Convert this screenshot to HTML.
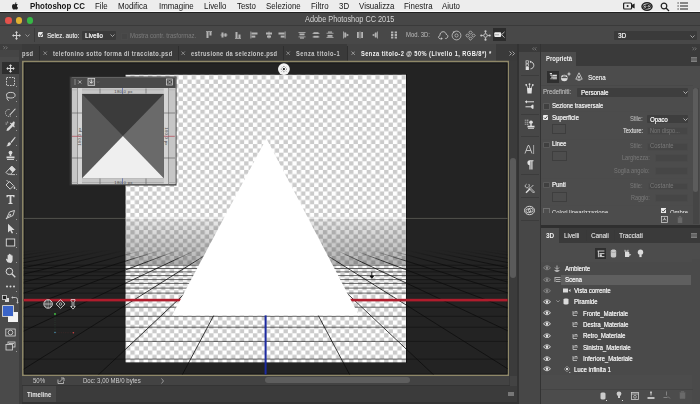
<!DOCTYPE html>
<html><head><meta charset="utf-8"><style>
html,body{margin:0;padding:0}
body{width:700px;height:404px;overflow:hidden;position:relative;background:#4c4c4c;font-family:"Liberation Sans", sans-serif}
</style></head><body>
<div style="position:absolute;left:0px;top:0px;width:700px;height:12.3px;background:#ededed;"></div><div style="position:absolute;left:0px;top:11.1px;width:700px;height:1.1px;background:#fafafa;"></div><div style="position:absolute;left:0px;top:12.3px;width:700px;height:1px;background:#202020;"></div><div style="position:absolute;left:30px;top:0.21px;font-size:9.88px;line-height:11.85px;color:#151515;font-weight:bold;white-space:nowrap;transform:scaleX(0.8000);transform-origin:0 0;">Photoshop CC</div><div style="position:absolute;left:95.4px;top:0.21px;font-size:9.88px;line-height:11.85px;color:#151515;font-weight:normal;white-space:nowrap;transform:scaleX(0.8000);transform-origin:0 0;">File</div><div style="position:absolute;left:118px;top:0.21px;font-size:9.88px;line-height:11.85px;color:#151515;font-weight:normal;white-space:nowrap;transform:scaleX(0.8000);transform-origin:0 0;">Modifica</div><div style="position:absolute;left:159px;top:0.21px;font-size:9.88px;line-height:11.85px;color:#151515;font-weight:normal;white-space:nowrap;transform:scaleX(0.8000);transform-origin:0 0;">Immagine</div><div style="position:absolute;left:203.6px;top:0.21px;font-size:9.88px;line-height:11.85px;color:#151515;font-weight:normal;white-space:nowrap;transform:scaleX(0.8000);transform-origin:0 0;">Livello</div><div style="position:absolute;left:237px;top:0.21px;font-size:9.88px;line-height:11.85px;color:#151515;font-weight:normal;white-space:nowrap;transform:scaleX(0.8000);transform-origin:0 0;">Testo</div><div style="position:absolute;left:266px;top:0.21px;font-size:9.88px;line-height:11.85px;color:#151515;font-weight:normal;white-space:nowrap;transform:scaleX(0.8000);transform-origin:0 0;">Selezione</div><div style="position:absolute;left:311px;top:0.21px;font-size:9.88px;line-height:11.85px;color:#151515;font-weight:normal;white-space:nowrap;transform:scaleX(0.8000);transform-origin:0 0;">Filtro</div><div style="position:absolute;left:339px;top:0.21px;font-size:9.88px;line-height:11.85px;color:#151515;font-weight:normal;white-space:nowrap;transform:scaleX(0.8000);transform-origin:0 0;">3D</div><div style="position:absolute;left:358.6px;top:0.21px;font-size:9.88px;line-height:11.85px;color:#151515;font-weight:normal;white-space:nowrap;transform:scaleX(0.8000);transform-origin:0 0;">Visualizza</div><div style="position:absolute;left:404px;top:0.21px;font-size:9.88px;line-height:11.85px;color:#151515;font-weight:normal;white-space:nowrap;transform:scaleX(0.8000);transform-origin:0 0;">Finestra</div><div style="position:absolute;left:442.4px;top:0.21px;font-size:9.88px;line-height:11.85px;color:#151515;font-weight:normal;white-space:nowrap;transform:scaleX(0.8000);transform-origin:0 0;">Aiuto</div><svg style="position:absolute;left:11px;top:0.7px;" width="8" height="9" viewBox="0 0 8 9"><path d="M5.3 1.2c.1.8-.6 1.7-1.4 1.7-.1-.8.6-1.6 1.4-1.7z M3.9 3.1c.5 0 .9-.3 1.4-.3.4 0 1.1.2 1.5.8-1.3.8-1.1 2.7.3 3.2-.3.8-.9 1.8-1.6 1.8-.5 0-.7-.3-1.3-.3s-.8.3-1.3.3C2 8.6 1 6.9 1 5.4c0-1.5 1-2.3 1.8-2.3.5 0 .8.3 1.1.3z" fill="#222"/></svg><svg style="position:absolute;left:623px;top:2px;" width="13" height="8" viewBox="0 0 13 8"><rect x="0.6" y="1" width="8" height="6" rx="1" fill="none" stroke="#222" stroke-width="1.2"/><circle cx="4.6" cy="4" r="1" fill="#222"/><path d="M8.6 3l3-1.5v5l-3-1.5z" fill="#222"/></svg><svg style="position:absolute;left:640.5px;top:1.5px;" width="12" height="9" viewBox="0 0 12 9"><ellipse cx="6" cy="4.5" rx="5" ry="3.7" fill="none" stroke="#222" stroke-width="1.5"/><ellipse cx="4.8" cy="4.7" rx="2.2" ry="1.7" fill="none" stroke="#222" stroke-width="1.1"/><ellipse cx="7.2" cy="4.3" rx="2.2" ry="1.7" fill="none" stroke="#222" stroke-width="1.1"/></svg><svg style="position:absolute;left:660px;top:1.5px;" width="10" height="10" viewBox="0 0 10 10"><circle cx="4" cy="4" r="2.8" fill="none" stroke="#222" stroke-width="1.2"/><path d="M6 6l3 3" stroke="#222" stroke-width="1.3"/></svg><svg style="position:absolute;left:676.5px;top:2px;" width="12" height="8" viewBox="0 0 12 8"><path d="M0.5 1h1.2M0.5 4h1.2M0.5 7h1.2M3 1h8M3 4h8M3 7h8" stroke="#222" stroke-width="1.2"/></svg><div style="position:absolute;left:0px;top:13px;width:700px;height:12.5px;background:#474747;"></div><div style="position:absolute;left:5.050000000000001px;top:17.05px;width:6.5px;height:6.5px;border-radius:50%;background:#e4524c"></div><div style="position:absolute;left:15.75px;top:17.05px;width:6.5px;height:6.5px;border-radius:50%;background:#e0b132"></div><div style="position:absolute;left:26.75px;top:17.05px;width:6.5px;height:6.5px;border-radius:50%;background:#36b846"></div><div style="position:absolute;left:305px;top:14.11px;font-size:9.19px;line-height:11.03px;color:#d5d5d5;font-weight:normal;white-space:nowrap;transform:scaleX(0.8000);transform-origin:0 0;">Adobe Photoshop CC 2015</div><div style="position:absolute;left:0px;top:25.5px;width:700px;height:18px;background:#484848;"></div><div style="position:absolute;left:0px;top:25.1px;width:700px;height:0.8px;background:#3a3a3a;"></div><div style="position:absolute;left:0px;top:43.5px;width:700px;height:0.8px;background:#2c2c2c;"></div><svg style="position:absolute;left:11.5px;top:30.5px;" width="9" height="9" viewBox="0 0 9 9"><path d="M4.5 1v7M1 4.5h7" stroke="#cfcfcf" stroke-width="1.1"/><path d="M4.5 0l-1.6 1.8h3.2zM4.5 9l-1.6-1.8h3.2zM0 4.5l1.8-1.6v3.2zM9 4.5L7.2 2.9v3.2z" fill="#cfcfcf"/></svg><svg style="position:absolute;left:24.5px;top:34px;" width="5" height="3" viewBox="0 0 5 3"><path d="M0.5 0.5l2 2 2-2" fill="none" stroke="#aaa" stroke-width="0.8"/></svg><div style="position:absolute;left:33.5px;top:28px;width:0.8px;height:14px;background:#3a3a3a;"></div><div style="position:absolute;left:37.7px;top:32px;width:5.4px;height:5.4px;background:#e8e8e8;border-radius:1px"></div><svg style="position:absolute;left:37.7px;top:32px;" width="6" height="6" viewBox="0 0 6 6"><path d="M1.2 2.8l1.4 1.4 2.4-3" fill="none" stroke="#333" stroke-width="1"/></svg><div style="position:absolute;left:46.9px;top:30.53px;font-size:7.62px;line-height:9.15px;color:#d8d8d8;font-weight:normal;white-space:nowrap;transform:scaleX(0.8000);transform-origin:0 0;text-shadow:0.22px 0 0 #d8d8d8">Selez. auto:</div><div style="position:absolute;left:81.9px;top:30.7px;width:33.8px;height:9.2px;background:#3a3a3a;border-radius:1px"></div><div style="position:absolute;left:84.6px;top:30.71px;font-size:7.82px;line-height:9.39px;color:#e8e8e8;font-weight:normal;white-space:nowrap;transform:scaleX(0.8000);transform-origin:0 0;text-shadow:0.22px 0 0 #e8e8e8">Livello</div><svg style="position:absolute;left:109.5px;top:34px;" width="5" height="3" viewBox="0 0 5 3"><path d="M0.5 0.5l2 2 2-2" fill="none" stroke="#bbb" stroke-width="0.8"/></svg><div style="position:absolute;left:120.5px;top:32.5px;width:5px;height:5px;background:#454545;border:0.5px solid #4a4a4a"></div><div style="position:absolute;left:129.9px;top:30.91px;font-size:7.49px;line-height:8.99px;color:#7d7d7d;font-weight:normal;white-space:nowrap;transform:scaleX(0.8000);transform-origin:0 0;">Mostra contr. trasformaz.</div><svg style="position:absolute;left:205px;top:31px;" width="8" height="8" viewBox="0 0 8 8"><rect x="1" y="0" width="6" height="0.8" fill="#b4b4b4"/><rect x="1.5" y="1" width="2" height="6" fill="#b4b4b4"/><rect x="4.5" y="1" width="2" height="3.5" fill="#b4b4b4"/></svg><svg style="position:absolute;left:219.8px;top:31px;" width="8" height="8" viewBox="0 0 8 8"><rect x="0.5" y="3.6" width="7" height="0.8" fill="#b4b4b4"/><rect x="1.5" y="1.5" width="2" height="5" fill="#b4b4b4"/><rect x="4.5" y="2.3" width="2" height="3.4" fill="#b4b4b4"/></svg><svg style="position:absolute;left:233.5px;top:31px;" width="8" height="8" viewBox="0 0 8 8"><rect x="1" y="7.2" width="6" height="0.8" fill="#b4b4b4"/><rect x="1.5" y="1" width="2" height="6" fill="#b4b4b4"/><rect x="4.5" y="3.5" width="2" height="3.5" fill="#b4b4b4"/></svg><svg style="position:absolute;left:250px;top:31px;" width="8" height="8" viewBox="0 0 8 8"><rect x="0.5" y="0.5" width="0.8" height="7" fill="#b4b4b4"/><rect x="1.5" y="1.5" width="6" height="2" fill="#b4b4b4"/><rect x="1.5" y="4.6" width="3.8" height="2" fill="#b4b4b4"/></svg><svg style="position:absolute;left:264.8px;top:31px;" width="8" height="8" viewBox="0 0 8 8"><rect x="3.6" y="0.5" width="0.8" height="7" fill="#b4b4b4"/><rect x="1" y="1.5" width="6" height="2" fill="#b4b4b4"/><rect x="2" y="4.6" width="4" height="2" fill="#b4b4b4"/></svg><svg style="position:absolute;left:278px;top:31px;" width="8" height="8" viewBox="0 0 8 8"><rect x="6.7" y="0.5" width="0.8" height="7" fill="#b4b4b4"/><rect x="0.5" y="1.5" width="6" height="2" fill="#b4b4b4"/><rect x="2.7" y="4.6" width="3.8" height="2" fill="#b4b4b4"/></svg><svg style="position:absolute;left:297.5px;top:31px;" width="8" height="8" viewBox="0 0 8 8"><rect x="0.5" y="1" width="7" height="0.8" fill="#b4b4b4"/><rect x="1.5" y="2.5" width="5" height="1.8" fill="#b4b4b4"/><rect x="0.5" y="5.5" width="7" height="0.8" fill="#b4b4b4"/><rect x="2" y="6.4" width="4" height="1.2" fill="#b4b4b4"/></svg><svg style="position:absolute;left:312px;top:31px;" width="8" height="8" viewBox="0 0 8 8"><rect x="0.5" y="2.2" width="7" height="0.7" fill="#b4b4b4"/><rect x="1.5" y="1.2" width="5" height="1.8" fill="#b4b4b4"/><rect x="0.5" y="5.6" width="7" height="0.7" fill="#b4b4b4"/><rect x="1.5" y="4.8" width="5" height="1.8" fill="#b4b4b4"/></svg><svg style="position:absolute;left:325.5px;top:31px;" width="8" height="8" viewBox="0 0 8 8"><rect x="2" y="0.5" width="4" height="1.2" fill="#b4b4b4"/><rect x="0.5" y="1.8" width="7" height="0.8" fill="#b4b4b4"/><rect x="1.5" y="4" width="5" height="1.8" fill="#b4b4b4"/><rect x="0.5" y="6.2" width="7" height="0.8" fill="#b4b4b4"/></svg><svg style="position:absolute;left:342px;top:31px;" width="8" height="8" viewBox="0 0 8 8"><rect x="1" y="0.5" width="0.8" height="7" fill="#b4b4b4"/><rect x="2.3" y="1.5" width="1.8" height="5" fill="#b4b4b4"/><path d="M4.5 2.5l2.5 1.5-2.5 1.5z" fill="#b4b4b4"/></svg><svg style="position:absolute;left:356.4px;top:31px;" width="8" height="8" viewBox="0 0 8 8"><rect x="1" y="1" width="1.8" height="6" fill="#b4b4b4"/><rect x="3.6" y="0.5" width="0.8" height="7" fill="#b4b4b4"/><rect x="5.2" y="1" width="1.8" height="6" fill="#b4b4b4"/></svg><svg style="position:absolute;left:370.5px;top:31px;" width="8" height="8" viewBox="0 0 8 8"><rect x="6.2" y="0.5" width="0.8" height="7" fill="#b4b4b4"/><rect x="3.9" y="1.5" width="1.8" height="5" fill="#b4b4b4"/><path d="M3.5 2.5L1 4l2.5 1.5z" fill="#b4b4b4"/></svg><svg style="position:absolute;left:390px;top:31px;" width="8" height="8" viewBox="0 0 8 8"><rect x="1" y="0.5" width="2.3" height="7" fill="#b4b4b4"/><rect x="4.7" y="0.5" width="2.3" height="7" fill="#b4b4b4"/><path d="M0.5 2.5h7M0.5 5.5h7" stroke="#484848" stroke-width="0.6"/></svg><div style="position:absolute;left:406px;top:30.87px;font-size:7.38px;line-height:8.85px;color:#bdbdbd;font-weight:normal;white-space:nowrap;transform:scaleX(0.8000);transform-origin:0 0;">Mod. 3D:</div><svg style="position:absolute;left:437px;top:29.5px;" width="12" height="11" viewBox="0 0 12 11"><path d="M3 5.5c-.3-2 1.2-3.8 3.2-3.8 1.6 0 2.8 1.2 2.9 2.6 1.3.4 2 1.4 1.7 2.6-.3 1-1.3 1.6-2.5 1.6" fill="none" stroke="#c8c8c8" stroke-width="0.9"/><path d="M3 5.5c-1.3.6-1.8 1.6-1.3 2.4.4.7 1.5 1 2.8.9" fill="none" stroke="#c8c8c8" stroke-width="0.9"/><path d="M4.2 7.2l1.6 1.6-2 .9z" fill="#c8c8c8"/></svg><svg style="position:absolute;left:451.3px;top:29.5px;" width="11" height="11" viewBox="0 0 11 11"><circle cx="5.5" cy="5.5" r="4.4" fill="none" stroke="#c8c8c8" stroke-width="0.8"/><circle cx="5.5" cy="5.5" r="1.6" fill="none" stroke="#c8c8c8" stroke-width="0.7"/><path d="M1.8 1.6l2.2.2-1.6 1.6z" fill="#c8c8c8"/></svg><svg style="position:absolute;left:465px;top:29.5px;" width="11" height="11" viewBox="0 0 11 11"><path d="M5.5 0.8l1.7 1.7-1.7 1.7-1.7-1.7zM5.5 6.8l1.7 1.7-1.7 1.7-1.7-1.7zM0.8 5.5l1.7-1.7 1.7 1.7-1.7 1.7zM6.8 5.5l1.7-1.7 1.7 1.7-1.7 1.7z" fill="none" stroke="#c8c8c8" stroke-width="0.8"/></svg><svg style="position:absolute;left:479.6px;top:29.5px;" width="11" height="11" viewBox="0 0 11 11"><circle cx="5.5" cy="5.5" r="1.8" fill="none" stroke="#c8c8c8" stroke-width="0.9"/><path d="M5.5 1v2.5M5.5 7.5V10M1 5.5h2.5M7.5 5.5H10" stroke="#c8c8c8" stroke-width="0.8"/><circle cx="5.5" cy="1.3" r="1.1" fill="#c8c8c8"/><circle cx="5.5" cy="9.7" r="1.1" fill="#c8c8c8"/><circle cx="1.3" cy="5.5" r="1.1" fill="#c8c8c8"/><circle cx="9.7" cy="5.5" r="1.1" fill="#c8c8c8"/></svg><div style="position:absolute;left:493px;top:28.2px;width:12.7px;height:13.3px;background:#2c2c2c;"></div><svg style="position:absolute;left:493px;top:28.2px;" width="13" height="13" viewBox="0 0 13 13"><rect x="1.3" y="4.3" width="6.8" height="4.8" rx="1" fill="#eee"/><circle cx="3" cy="6.7" r="0.7" fill="#888"/><circle cx="5" cy="6.7" r="0.7" fill="#888"/><path d="M8.5 6.7l3-2.8M8.5 6.7l3 2.8" fill="none" stroke="#ddd" stroke-width="0.8"/></svg><div style="position:absolute;left:614px;top:30.7px;width:82.6px;height:9.8px;background:#3a3a3a;border-radius:1px"></div><div style="position:absolute;left:617.7px;top:30.98px;font-size:7.88px;line-height:9.45px;color:#e8e8e8;font-weight:normal;white-space:nowrap;transform:scaleX(0.8000);transform-origin:0 0;text-shadow:0.22px 0 0 #e8e8e8">3D</div><svg style="position:absolute;left:689.5px;top:34.5px;" width="5" height="3" viewBox="0 0 5 3"><path d="M0.5 0.5l2 2 2-2" fill="none" stroke="#bbb" stroke-width="0.8"/></svg><div style="position:absolute;left:19.5px;top:44.3px;width:498px;height:17px;background:#3a3a3a;"></div><div style="position:absolute;left:347px;top:44.3px;width:149px;height:17px;background:#444444;"></div><div style="position:absolute;left:22.3px;top:49.29px;font-size:7.52px;line-height:9.03px;color:#c8c8c8;font-weight:bold;white-space:nowrap;letter-spacing:0.638px;transform:scaleX(0.7576);transform-origin:0 0">psd</div><div style="position:absolute;left:39.4px;top:45.5px;width:0.7px;height:15px;background:#2f2f2f;"></div><div style="position:absolute;left:177.7px;top:45.5px;width:0.7px;height:15px;background:#2f2f2f;"></div><div style="position:absolute;left:283px;top:45.5px;width:0.7px;height:15px;background:#2f2f2f;"></div><div style="position:absolute;left:347px;top:45.5px;width:0.7px;height:15px;background:#2f2f2f;"></div><svg style="position:absolute;left:43.199999999999996px;top:50.5px;" width="4.4" height="4.4" viewBox="0 0 4.4 4.4"><path d="M0.5 0.5l3.4 3.4M3.9 0.5l-3.4 3.4" stroke="#a8a8a8" stroke-width="0.7"/></svg><svg style="position:absolute;left:181.20000000000002px;top:50.5px;" width="4.4" height="4.4" viewBox="0 0 4.4 4.4"><path d="M0.5 0.5l3.4 3.4M3.9 0.5l-3.4 3.4" stroke="#a8a8a8" stroke-width="0.7"/></svg><svg style="position:absolute;left:286.40000000000003px;top:50.5px;" width="4.4" height="4.4" viewBox="0 0 4.4 4.4"><path d="M0.5 0.5l3.4 3.4M3.9 0.5l-3.4 3.4" stroke="#a8a8a8" stroke-width="0.7"/></svg><svg style="position:absolute;left:350.8px;top:50.5px;" width="4.4" height="4.4" viewBox="0 0 4.4 4.4"><path d="M0.5 0.5l3.4 3.4M3.9 0.5l-3.4 3.4" stroke="#b8b8b8" stroke-width="0.7"/></svg><div style="position:absolute;left:52.8px;top:49.29px;font-size:7.52px;line-height:9.03px;color:#c8c8c8;font-weight:bold;white-space:nowrap;letter-spacing:0.533px;transform:scaleX(0.7576);transform-origin:0 0">telefonino sotto forma di tracciato.psd</div><div style="position:absolute;left:190.9px;top:49.29px;font-size:7.52px;line-height:9.03px;color:#c8c8c8;font-weight:bold;white-space:nowrap;letter-spacing:0.512px;transform:scaleX(0.7576);transform-origin:0 0">estrusione da selezione.psd</div><div style="position:absolute;left:295.7px;top:49.29px;font-size:7.52px;line-height:9.03px;color:#c8c8c8;font-weight:bold;white-space:nowrap;letter-spacing:0.675px;transform:scaleX(0.7576);transform-origin:0 0">Senza titolo-1</div><div style="position:absolute;left:360.6px;top:49.29px;font-size:7.52px;line-height:9.03px;color:#f4f4f4;font-weight:bold;white-space:nowrap;letter-spacing:0.590px;transform:scaleX(0.7576);transform-origin:0 0">Senza titolo-2 @ 50% (Livello 1, RGB/8*) *</div><svg style="position:absolute;left:508.5px;top:50.5px;" width="7" height="5" viewBox="0 0 7 5"><path d="M0.5 0.5l2 2-2 2M3.5 0.5l2 2-2 2" fill="none" stroke="#c0c0c0" stroke-width="0.8"/></svg><div style="position:absolute;left:0px;top:44.3px;width:19.3px;height:360px;background:#4a4a4a;"></div><div style="position:absolute;left:0px;top:44.3px;width:19.3px;height:5.7px;background:#3e3e3e;"></div><div style="position:absolute;left:0px;top:50px;width:19.3px;height:7px;background:#454545;"></div><svg style="position:absolute;left:3px;top:45.8px;" width="6" height="4" viewBox="0 0 6 4"><path d="M0.3 0.3l1.5 1.5-1.5 1.5M2.8 0.3l1.5 1.5-1.5 1.5" fill="none" stroke="#999" stroke-width="0.6"/></svg><div style="position:absolute;left:19.3px;top:44.3px;width:2.7px;height:360px;background:#3e3e3e;"></div><div style="position:absolute;left:2.2px;top:61.7px;width:16.4px;height:12.3px;background:#2e2e2e;"></div><svg style="position:absolute;left:4.699999999999999px;top:62.599999999999994px;" width="11" height="11" viewBox="0 0 11 11"><path d="M5.5 2.5v6M2.5 5.5h6" stroke="#dadada" stroke-width="1.2"/><path d="M5.5 1.3l-1.7 1.8h3.4zM5.5 9.7l-1.7-1.8h3.4zM1.3 5.5l1.8-1.7v3.4zM9.7 5.5l-1.8-1.7v3.4z" fill="#dadada"/></svg><svg style="position:absolute;left:4.699999999999999px;top:76.3px;" width="11" height="11" viewBox="0 0 11 11"><rect x="1.5" y="1.5" width="8" height="8" fill="none" stroke="#dadada" stroke-width="0.9" stroke-dasharray="1.6 1.1"/></svg><div style="position:absolute;left:16px;top:85.8px;width:1.1px;height:1.1px;background:#9a9a9a;"></div><svg style="position:absolute;left:4.699999999999999px;top:91.4px;" width="11" height="11" viewBox="0 0 11 11"><ellipse cx="5.8" cy="4.2" rx="4.3" ry="2.8" fill="none" stroke="#dadada" stroke-width="0.9"/><path d="M2.2 6c-.8 1.4.3 2.6 1.5 3.8" fill="none" stroke="#dadada" stroke-width="0.9"/></svg><div style="position:absolute;left:16px;top:100.9px;width:1.1px;height:1.1px;background:#9a9a9a;"></div><svg style="position:absolute;left:4.699999999999999px;top:106.7px;" width="11" height="11" viewBox="0 0 11 11"><path d="M4.5 2.5a3.5 3.5 0 1 0 1.8 6" fill="none" stroke="#dadada" stroke-width="0.8" stroke-dasharray="1.2 0.8"/><path d="M10 1.5L5 7l-1 1.5 1.6-.8L10.8 2z" fill="#dadada"/></svg><div style="position:absolute;left:16px;top:116.2px;width:1.1px;height:1.1px;background:#9a9a9a;"></div><svg style="position:absolute;left:4.699999999999999px;top:120.6px;" width="11" height="11" viewBox="0 0 11 11"><path d="M9.8 1.2l-1-1-2.2 2.2-.8-.8-.8.8 1.2 1.2L2 7.8 1.5 10l2.2-.5 4.2-4.2 1.2 1.2.8-.8-.8-.8z" fill="#dadada"/><path d="M1 1.5l1 1M2.5 0.5l.3 1.5M0.5 3l1.5.2" stroke="#dadada" stroke-width="0.6"/></svg><div style="position:absolute;left:16px;top:130.1px;width:1.1px;height:1.1px;background:#9a9a9a;"></div><svg style="position:absolute;left:4.699999999999999px;top:135.5px;" width="11" height="11" viewBox="0 0 11 11"><path d="M10 0.8L5.5 6l1 1L10.6 1.4z" fill="#dadada"/><path d="M5.2 6.4c-1.3-.3-2.5.6-2.6 2-.1 1-.8 1.4-1.6 1.6 2 .6 4.5.1 5-2.4z" fill="#dadada"/></svg><div style="position:absolute;left:16px;top:145px;width:1.1px;height:1.1px;background:#9a9a9a;"></div><svg style="position:absolute;left:4.699999999999999px;top:150.4px;" width="11" height="11" viewBox="0 0 11 11"><circle cx="5.5" cy="2.6" r="1.9" fill="#dadada"/><path d="M4.7 4h1.6v2.2H4.7z" fill="#dadada"/><path d="M1.5 6.5h8v1.8h-8z" fill="#dadada"/><path d="M2 9h7v.9H2z" fill="#dadada"/></svg><div style="position:absolute;left:16px;top:159.9px;width:1.1px;height:1.1px;background:#9a9a9a;"></div><svg style="position:absolute;left:4.699999999999999px;top:164.5px;" width="11" height="11" viewBox="0 0 11 11"><path d="M6.8 1l3.5 3.5-4.7 4.7H2.8L1 7.4z" fill="none" stroke="#dadada" stroke-width="0.9"/><path d="M6.8 1l3.5 3.5-2.8 2.8L4 3.8z" fill="#dadada"/><path d="M5.5 9.6h4.5" stroke="#dadada" stroke-width="0.8"/></svg><div style="position:absolute;left:16px;top:174px;width:1.1px;height:1.1px;background:#9a9a9a;"></div><svg style="position:absolute;left:4.699999999999999px;top:179.4px;" width="11" height="11" viewBox="0 0 11 11"><path d="M4.5 2.5l4.2 4.2-3.5 3.5L1 6z" fill="none" stroke="#dadada" stroke-width="0.9"/><path d="M1.5 1l2.5 2.5" stroke="#dadada" stroke-width="0.8"/><path d="M9.5 7.2c.6.9.9 1.5.9 1.9a.9.9 0 0 1-1.8 0c0-.4.3-1 .9-1.9z" fill="#dadada"/></svg><div style="position:absolute;left:16px;top:188.9px;width:1.1px;height:1.1px;background:#9a9a9a;"></div><svg style="position:absolute;left:4.699999999999999px;top:193.5px;" width="11" height="11" viewBox="0 0 11 11"><path d="M1.5 1h8v2.2h-1L8 2.2H6.4v6.6l1.2.4V10H3.4v-.8l1.2-.4V2.2H3l-.5 1H1.5z" fill="#dadada"/></svg><svg style="position:absolute;left:4.699999999999999px;top:209.1px;" width="11" height="11" viewBox="0 0 11 11"><path d="M9.5 1.5L4.5 3 2 8.5 1 10l1.5-1L8 6.5z" fill="none" stroke="#dadada" stroke-width="0.9"/><circle cx="5.2" cy="5.8" r="0.9" fill="#dadada"/><path d="M2.2 8.8L4.6 6.4" stroke="#dadada" stroke-width="0.6"/></svg><div style="position:absolute;left:16px;top:218.6px;width:1.1px;height:1.1px;background:#9a9a9a;"></div><svg style="position:absolute;left:4.699999999999999px;top:223.2px;" width="11" height="11" viewBox="0 0 11 11"><path d="M3 0.8v8.6l2.2-2 1.6 3.2 1.3-.6-1.5-3.1h3z" fill="#dadada"/></svg><div style="position:absolute;left:16px;top:232.7px;width:1.1px;height:1.1px;background:#9a9a9a;"></div><svg style="position:absolute;left:4.699999999999999px;top:237.3px;" width="11" height="11" viewBox="0 0 11 11"><rect x="1.3" y="2" width="8.4" height="7" fill="#3c3c3c" stroke="#dadada" stroke-width="0.9"/></svg><div style="position:absolute;left:16px;top:246.8px;width:1.1px;height:1.1px;background:#9a9a9a;"></div><svg style="position:absolute;left:4.699999999999999px;top:252.89999999999998px;" width="11" height="11" viewBox="0 0 11 11"><path d="M3 9.5C1.8 8.2.8 6.5 1 6c.3-.6 1-.4 1.6.4V2.4c0-.9 1.2-.9 1.2 0V5V1.4c0-.9 1.3-.9 1.3 0V5V1.9c0-.9 1.3-.9 1.3 0V5V3c0-.9 1.2-.9 1.2 0v3.8c0 1.6-.8 2.7-1.6 3.2z" fill="#dadada"/></svg><div style="position:absolute;left:16px;top:262.4px;width:1.1px;height:1.1px;background:#9a9a9a;"></div><svg style="position:absolute;left:4.699999999999999px;top:267.0px;" width="11" height="11" viewBox="0 0 11 11"><circle cx="4.4" cy="4.4" r="3.3" fill="none" stroke="#dadada" stroke-width="1"/><path d="M6.8 6.8l3.5 3.5" stroke="#dadada" stroke-width="1.3"/></svg><svg style="position:absolute;left:4.699999999999999px;top:281.2px;" width="11" height="11" viewBox="0 0 11 11"><circle cx="2" cy="5.5" r="1" fill="#dadada"/><circle cx="5.5" cy="5.5" r="1" fill="#dadada"/><circle cx="9" cy="5.5" r="1" fill="#dadada"/></svg><div style="position:absolute;left:16px;top:290.7px;width:1.1px;height:1.1px;background:#9a9a9a;"></div><svg style="position:absolute;left:4.699999999999999px;top:326.5px;" width="11" height="11" viewBox="0 0 11 11"><rect x="0.8" y="2" width="9.4" height="7" fill="none" stroke="#dadada" stroke-width="0.8"/><circle cx="5.5" cy="5.5" r="2.3" fill="none" stroke="#dadada" stroke-width="0.8"/></svg><svg style="position:absolute;left:4.699999999999999px;top:341.4px;" width="11" height="11" viewBox="0 0 11 11"><rect x="3" y="1" width="7" height="5" fill="none" stroke="#dadada" stroke-width="0.8"/><rect x="1" y="3.5" width="6.5" height="5.5" fill="#4d4d4d" stroke="#dadada" stroke-width="0.8"/><path d="M4 2.5h5" stroke="#dadada" stroke-width="0.8"/></svg><div style="position:absolute;left:16px;top:350.9px;width:1.1px;height:1.1px;background:#9a9a9a;"></div><svg style="position:absolute;left:1.5px;top:295px;" width="8" height="8" viewBox="0 0 8 8"><rect x="0.5" y="0.5" width="4" height="4" fill="#222" stroke="#dadada" stroke-width="0.7"/><rect x="3" y="3" width="4" height="4" fill="#dadada"/><rect x="0.5" y="0.5" width="4" height="4" fill="#222" stroke="#dadada" stroke-width="0.7"/></svg><svg style="position:absolute;left:11px;top:295.5px;" width="8" height="8" viewBox="0 0 8 8"><path d="M1.5 1.5h3a2 2 0 0 1 2 2v3" fill="none" stroke="#dadada" stroke-width="0.8"/><path d="M0.3 1.5l1.5-1.2v2.4zM6.5 7.8l-1.2-1.5h2.4z" fill="#dadada"/></svg><div style="position:absolute;left:8.2px;top:312px;width:9.6px;height:9.9px;background:#f4f4f4;"></div><div style="position:absolute;left:3px;top:306.4px;width:9.6px;height:10px;background:#3a64c8;box-shadow:0 0 0 0.8px #e8e8e8"></div><svg style="position:absolute;left:0;top:0" width="700" height="404" viewBox="0 0 700 404"><defs><pattern id="chk" x="121.65" y="75.3" width="8.75" height="8.6" patternUnits="userSpaceOnUse"><rect width="8.75" height="8.6" fill="#fff"/><rect width="4.375" height="4.3" fill="#cbcbcb"/><rect x="4.375" y="4.3" width="4.375" height="4.3" fill="#cbcbcb"/></pattern><clipPath id="cv"><rect x="23.7" y="62.4" width="483.9" height="312.1"/></clipPath><linearGradient id="fade" x1="0" y1="0" x2="0" y2="1"><stop offset="0" stop-color="#fff" stop-opacity="0"/><stop offset="1" stop-color="#fff" stop-opacity="1"/></linearGradient><mask id="m1" maskUnits="userSpaceOnUse" x="0" y="0" width="700" height="404"><rect x="0" y="250" width="700" height="12" fill="url(#fade)"/><rect x="0" y="262" width="700" height="150" fill="#fff"/></mask><linearGradient id="fog" x1="0" y1="0" x2="0" y2="1"><stop offset="0" stop-color="#000" stop-opacity="0.08"/><stop offset="1" stop-color="#000" stop-opacity="0.3"/></linearGradient></defs><rect x="22.9" y="61.6" width="485.5" height="313.7" fill="none" stroke="#8f8868" stroke-width="1.7"/><g clip-path="url(#cv)"><rect x="23" y="62" width="485" height="313" fill="#232323"/><rect x="24.2" y="62.9" width="482.9" height="311.1" fill="none" stroke="#161616" stroke-width="0.9"/><rect x="124.8" y="74" width="282" height="289" fill="#111"/><rect x="125.5" y="74.7" width="280.5" height="287.7" fill="url(#chk)"/><rect x="125.5" y="218.6" width="280.5" height="45.9" fill="url(#fog)"/><g mask="url(#m1)"><line x1="23" y1="359.1" x2="508" y2="359.1" stroke="#111" stroke-opacity="0.75" stroke-width="0.85"/><line x1="23" y1="341.4" x2="508" y2="341.4" stroke="#111" stroke-opacity="0.75" stroke-width="0.85"/><line x1="23" y1="327.2" x2="508" y2="327.2" stroke="#111" stroke-opacity="0.75" stroke-width="0.85"/><line x1="23" y1="316.3" x2="508" y2="316.3" stroke="#111" stroke-opacity="0.75" stroke-width="0.85"/><line x1="23" y1="307.2" x2="508" y2="307.2" stroke="#111" stroke-opacity="0.75" stroke-width="0.85"/><line x1="23" y1="300.2" x2="508" y2="300.2" stroke="#111" stroke-opacity="0.75" stroke-width="0.85"/><line x1="23" y1="293.1" x2="508" y2="293.1" stroke="#111" stroke-opacity="0.75" stroke-width="0.85"/><line x1="23" y1="288.1" x2="508" y2="288.1" stroke="#111" stroke-opacity="0.75" stroke-width="0.85"/><line x1="23" y1="283.4" x2="508" y2="283.4" stroke="#111" stroke-opacity="0.75" stroke-width="0.85"/><line x1="23" y1="279.6" x2="508" y2="279.6" stroke="#111" stroke-opacity="0.75" stroke-width="0.85"/><line x1="23" y1="275.6" x2="508" y2="275.6" stroke="#111" stroke-opacity="0.75" stroke-width="0.85"/><line x1="23" y1="271.9" x2="508" y2="271.9" stroke="#111" stroke-opacity="0.75" stroke-width="0.85"/><line x1="23" y1="268.5" x2="508" y2="268.5" stroke="#111" stroke-opacity="0.75" stroke-width="0.85"/><line x1="23" y1="265.2" x2="508" y2="265.2" stroke="#111" stroke-opacity="0.75" stroke-width="0.85"/><line x1="266" y1="217" x2="-945.6" y2="380" stroke="#0e0e0e" stroke-width="0.8"/><line x1="266" y1="217" x2="-859.1" y2="380" stroke="#0e0e0e" stroke-width="0.8"/><line x1="266" y1="217" x2="-772.5" y2="380" stroke="#0e0e0e" stroke-width="0.8"/><line x1="266" y1="217" x2="-686.0" y2="380" stroke="#0e0e0e" stroke-width="0.8"/><line x1="266" y1="217" x2="-599.4" y2="380" stroke="#0e0e0e" stroke-width="0.8"/><line x1="266" y1="217" x2="-512.9" y2="380" stroke="#0e0e0e" stroke-width="0.8"/><line x1="266" y1="217" x2="-426.4" y2="380" stroke="#0e0e0e" stroke-width="0.8"/><line x1="266" y1="217" x2="-339.8" y2="380" stroke="#0e0e0e" stroke-width="0.8"/><line x1="266" y1="217" x2="-253.3" y2="380" stroke="#0e0e0e" stroke-width="0.8"/><line x1="266" y1="217" x2="-166.7" y2="380" stroke="#0e0e0e" stroke-width="0.8"/><line x1="266" y1="217" x2="-80.2" y2="380" stroke="#0e0e0e" stroke-width="0.8"/><line x1="266" y1="217" x2="6.4" y2="380" stroke="#0e0e0e" stroke-width="0.8"/><line x1="266" y1="217" x2="92.9" y2="380" stroke="#0e0e0e" stroke-width="0.8"/><line x1="266" y1="217" x2="179.5" y2="380" stroke="#0e0e0e" stroke-width="0.8"/><line x1="266" y1="217" x2="352.5" y2="380" stroke="#0e0e0e" stroke-width="0.8"/><line x1="266" y1="217" x2="439.1" y2="380" stroke="#0e0e0e" stroke-width="0.8"/><line x1="266" y1="217" x2="525.6" y2="380" stroke="#0e0e0e" stroke-width="0.8"/><line x1="266" y1="217" x2="612.2" y2="380" stroke="#0e0e0e" stroke-width="0.8"/><line x1="266" y1="217" x2="698.7" y2="380" stroke="#0e0e0e" stroke-width="0.8"/><line x1="266" y1="217" x2="785.3" y2="380" stroke="#0e0e0e" stroke-width="0.8"/><line x1="266" y1="217" x2="871.8" y2="380" stroke="#0e0e0e" stroke-width="0.8"/><line x1="266" y1="217" x2="958.4" y2="380" stroke="#0e0e0e" stroke-width="0.8"/><line x1="266" y1="217" x2="1044.9" y2="380" stroke="#0e0e0e" stroke-width="0.8"/><line x1="266" y1="217" x2="1131.4" y2="380" stroke="#0e0e0e" stroke-width="0.8"/><line x1="266" y1="217" x2="1218.0" y2="380" stroke="#0e0e0e" stroke-width="0.8"/><line x1="266" y1="217" x2="1304.5" y2="380" stroke="#0e0e0e" stroke-width="0.8"/><line x1="266" y1="217" x2="1391.1" y2="380" stroke="#0e0e0e" stroke-width="0.8"/><line x1="266" y1="217" x2="1477.6" y2="380" stroke="#0e0e0e" stroke-width="0.8"/></g><line x1="23" y1="218.4" x2="125.5" y2="218.4" stroke="#5e5e58" stroke-width="0.8"/><line x1="406" y1="218.4" x2="508" y2="218.4" stroke="#5e5e58" stroke-width="0.8"/><line x1="125.5" y1="218.2" x2="406" y2="218.2" stroke="#fff" stroke-opacity="0.7" stroke-width="0.9"/><rect x="23" y="298.8" width="485" height="2.6" fill="#b01c2c"/><polygon points="266.4,138.5 172,315.4 359,315.4" fill="#fff"/><rect x="264.6" y="315.4" width="2" height="60" fill="#1c2aa0"/><circle cx="283.9" cy="69.1" r="5.9" fill="#f4f4f4"/><circle cx="283.9" cy="69.1" r="1.1" fill="#111"/><path d="M283.9 66v1M283.9 71.2v1M280.8 69.1h1M286 69.1h1M281.7 66.9l.6.6M285.5 70.7l.6.6M281.7 71.3l.6-.6M285.5 67.5l.6-.6" stroke="#111" stroke-width="0.6"/><circle cx="48.1" cy="304" r="4.2" fill="#262626" stroke="#f0f0f0" stroke-width="0.9"/><path d="M48.1 300v8M44.3 304h7.6" stroke="#e8e8e8" stroke-width="0.6"/><path d="M46 301.2v5.6M50.2 301.2v5.6" stroke="#e8e8e8" stroke-width="0.5"/><path d="M60.5 299.6l4.4 4.4-4.4 4.4-4.4-4.4z" fill="none" stroke="#eee" stroke-width="0.8"/><circle cx="60.5" cy="304" r="1.3" fill="none" stroke="#eee" stroke-width="0.6"/><path d="M71 299.6h4v1.2l-1.1 1.1v4.6h1.4l-2.3 2.6-2.3-2.6h1.4v-4.6l-1.1-1.1z" fill="none" stroke="#eee" stroke-width="0.75"/><path d="M55 315v17" stroke="#3f6f4f" stroke-width="0.4" stroke-dasharray="0.6 1.2"/><circle cx="55" cy="314" r="0.9" fill="#4c4"/><circle cx="55" cy="332.5" r="0.8" fill="#4a8aaa"/><path d="M56 332.7h17" stroke="#6a3030" stroke-width="0.4" stroke-dasharray="0.6 1.2"/><circle cx="73.4" cy="332.8" r="0.8" fill="#c44"/><path d="M371.8 272v5.5M370 276l1.8 2.3 1.8-2.3z" stroke="#111" stroke-width="0.9" fill="#111"/></g><rect x="69.5" y="76.5" width="107" height="109" fill="#333"/><rect x="71.8" y="77.3" width="103.9" height="107" fill="#c6c6c6"/><rect x="70.5" y="77.3" width="105.2" height="10.7" fill="#4a4a4a"/><path d="M75 79v6" stroke="#999" stroke-width="0.8"/><path d="M78.3 80.5l3 3M81.3 80.5l-3 3" stroke="#ddd" stroke-width="0.7"/><rect x="88" y="78.5" width="6.7" height="7" fill="#666" stroke="#ddd" stroke-width="0.7"/><path d="M91.3 79.5v3.5M89.5 81.5l1.8 1.8 1.8-1.8" fill="none" stroke="#fff" stroke-width="0.7"/><path d="M97 81.5l1 1 1-1" fill="none" stroke="#888" stroke-width="0.5"/><rect x="166.6" y="79" width="6" height="6" fill="none" stroke="#ddd" stroke-width="0.7"/><path d="M167.8 80.2l3.6 3.6M171.4 80.2l-3.6 3.6" stroke="#ddd" stroke-width="0.6"/><rect x="77.1" y="88" width="0.8" height="96.3" fill="#8a8a8a"/><rect x="168" y="88" width="0.8" height="96.3" fill="#8a8a8a"/><rect x="71.8" y="89.6" width="103.9" height="0.6" fill="#a8a8a8"/><rect x="71.8" y="182" width="103.9" height="0.6" fill="#a0a0a0"/><rect x="78" y="88" width="4" height="96" fill="#d4d4d4"/><rect x="163.8" y="88" width="4.2" height="96" fill="#d4d4d4"/><rect x="82" y="93.9" width="81.8" height="84.3" fill="#444"/><polygon points="82,93.9 163.8,93.9 122.9,136" fill="#3b3b3b"/><polygon points="82,93.9 82,178.2 122.9,136" fill="#585858"/><polygon points="163.8,93.9 163.8,178.2 122.9,136" fill="#6a6a6a"/><polygon points="82,178.2 163.8,178.2 122.9,136" fill="#efefef"/><path d="M100 88.5v5M146 88.5v5M100 178.5v5.5M146 178.5v5.5M72 113h10M72 158h10M164 113h11M164 158h11" stroke="#555" stroke-width="0.6"/><path d="M72 136.3h10M163.8 136.3h11" stroke="#b04050" stroke-width="0.7"/><path d="M122.5 88v6M122.5 178.3v6" stroke="#5060a0" stroke-width="0.7"/><text x="123.5" y="93.1" text-anchor="middle" font-size="4.3" letter-spacing="0.25" fill="#4a4a4a" font-family="Liberation Sans">180,0 px</text><text x="123.5" y="183.6" text-anchor="middle" font-size="4.3" letter-spacing="0.25" fill="#4a4a4a" font-family="Liberation Sans">180,0 px</text><text transform="translate(81,136.5) rotate(-90)" text-anchor="middle" font-size="4.3" letter-spacing="0.25" fill="#4a4a4a" font-family="Liberation Sans">180,0 px</text><text transform="translate(164.8,136.5) rotate(90)" text-anchor="middle" font-size="4.3" letter-spacing="0.25" fill="#4a4a4a" font-family="Liberation Sans">180,0 px</text></svg><div style="position:absolute;left:22px;top:376px;width:486.5px;height:9.5px;background:#434343;"></div><div style="position:absolute;left:32.6px;top:375.86px;font-size:7.56px;line-height:9.07px;color:#cfcfcf;font-weight:normal;white-space:nowrap;transform:scaleX(0.8000);transform-origin:0 0;">50%</div><svg style="position:absolute;left:56.5px;top:377px;" width="8" height="7" viewBox="0 0 8 7"><path d="M1 2.5v4h5.5v-2" fill="none" stroke="#ccc" stroke-width="0.8"/><path d="M2.5 5l3.5-3.5M4 1h3v3" fill="none" stroke="#ccc" stroke-width="0.8"/></svg><div style="position:absolute;left:82.9px;top:375.86px;font-size:7.56px;line-height:9.07px;color:#cfcfcf;font-weight:normal;white-space:nowrap;transform:scaleX(0.8000);transform-origin:0 0;">Doc: 3,00 MB/0 bytes</div><svg style="position:absolute;left:160.5px;top:377.5px;" width="3" height="6" viewBox="0 0 3 6"><path d="M0.5 0.5l2 2.5-2 2.5" fill="none" stroke="#ccc" stroke-width="0.6"/></svg><div style="position:absolute;left:265px;top:377.3px;width:145px;height:6.2px;background:#5e5e5e;border-radius:3px"></div><div style="position:absolute;left:22px;top:385px;width:495px;height:19px;background:#3b3b3b;"></div><div style="position:absolute;left:22px;top:385px;width:495px;height:1.2px;background:#343434;"></div><div style="position:absolute;left:23px;top:386.4px;width:32.7px;height:15.7px;background:#484848;"></div><div style="position:absolute;left:22px;top:402.2px;width:495px;height:1.8px;background:#333;"></div><div style="position:absolute;left:27.3px;top:390.40px;font-size:7.50px;line-height:9.00px;color:#e8e8e8;font-weight:bold;white-space:nowrap;transform:scaleX(0.8000);transform-origin:0 0;">Timeline</div><div style="position:absolute;left:508px;top:392px;width:5.7px;height:4px;background:#777;"></div><div style="position:absolute;left:508.5px;top:61px;width:9px;height:324px;background:#3b3b3b;"></div><div style="position:absolute;left:509.5px;top:376px;width:8px;height:9.5px;background:#434343;"></div><div style="position:absolute;left:510.3px;top:157.8px;width:6px;height:120.6px;background:#5a5a5a;border-radius:3px"></div><div style="position:absolute;left:517px;top:44.3px;width:2.4px;height:360px;background:#333;"></div><div style="position:absolute;left:519.4px;top:44.3px;width:180.6px;height:8.1px;background:#3a3a3a;"></div><svg style="position:absolute;left:532px;top:46.5px;" width="5" height="4" viewBox="0 0 5 4"><path d="M2 0.3L0.5 1.8 2 3.3M4.3 0.3L2.8 1.8l1.5 1.5" fill="none" stroke="#999" stroke-width="0.6"/></svg><svg style="position:absolute;left:691.5px;top:46.5px;" width="5" height="4" viewBox="0 0 5 4"><path d="M0.5 0.3L2 1.8.5 3.3M2.8 0.3l1.5 1.5-1.5 1.5" fill="none" stroke="#999" stroke-width="0.6"/></svg><div style="position:absolute;left:519.4px;top:52.4px;width:20.6px;height:352px;background:#474747;"></div><div style="position:absolute;left:521px;top:74.7px;width:17.5px;height:0.8px;background:#3c3c3c;"></div><div style="position:absolute;left:521px;top:114px;width:17.5px;height:0.8px;background:#3c3c3c;"></div><div style="position:absolute;left:521px;top:136.4px;width:17.5px;height:0.8px;background:#3c3c3c;"></div><div style="position:absolute;left:521px;top:174.3px;width:17.5px;height:0.8px;background:#3c3c3c;"></div><div style="position:absolute;left:521px;top:197.4px;width:17.5px;height:0.8px;background:#3c3c3c;"></div><div style="position:absolute;left:521px;top:220.4px;width:17.5px;height:0.8px;background:#3c3c3c;"></div><div style="position:absolute;left:540px;top:44.3px;width:1.4px;height:360px;background:#333;"></div><svg style="position:absolute;left:524.0px;top:59.5px;" width="11" height="11" viewBox="0 0 11 11"><rect x="2" y="0.8" width="2.6" height="2.4" fill="none" stroke="#e0e0e0" stroke-width="0.7"/><rect x="2" y="4" width="2.6" height="2.4" fill="none" stroke="#e0e0e0" stroke-width="0.7"/><rect x="1.7" y="7" width="3.2" height="3" fill="#e0e0e0"/><path d="M6.5 1.8c2.2.2 3.3 1.8 3.3 3.6 0 1.8-1.3 3.3-3.3 3.5" fill="none" stroke="#e0e0e0" stroke-width="0.9"/><path d="M5.8 0.6l1.6 1.2-1.4 1.3z" fill="#e0e0e0"/></svg><svg style="position:absolute;left:524.0px;top:82.5px;" width="11" height="11" viewBox="0 0 11 11"><path d="M3 5h5l-.4 5.5H3.4z" fill="#e0e0e0"/><path d="M3.8 5L2.3 1.8M5.5 5V1.2M7.2 5l1.5-3" stroke="#e0e0e0" stroke-width="0.7"/><circle cx="2.2" cy="1.8" r="0.9" fill="#e0e0e0"/><circle cx="5.5" cy="1.2" r="0.9" fill="#e0e0e0"/><circle cx="8.8" cy="1.9" r="0.9" fill="#e0e0e0"/></svg><svg style="position:absolute;left:524.0px;top:98.5px;" width="11" height="11" viewBox="0 0 11 11"><path d="M3 2.8h7M1.5 7.8h6" stroke="#e0e0e0" stroke-width="1"/><path d="M0.8 2.8l2.2-1.6v3.2z" fill="#e0e0e0"/><path d="M7 7.8c0-1.3.9-2 2.2-2.2.5 1 .5 3.4 0 4.4-1.3-.2-2.2-.9-2.2-2.2z" fill="#e0e0e0"/></svg><svg style="position:absolute;left:524.0px;top:119.0px;" width="11" height="11" viewBox="0 0 11 11"><path d="M0.8 1.2h1M0.8 3.2h1M0.8 5.2h1M2.6 1.2h1.8M2.6 3.2h1.8M2.6 5.2h1.8" stroke="#e0e0e0" stroke-width="0.8"/><circle cx="7" cy="3.3" r="1.8" fill="#e0e0e0"/><path d="M6.3 4.8h1.4v2H6.3zM3.5 6.8h7v1.8h-7zM4 9.2h6v.9H4z" fill="#e0e0e0"/></svg><svg style="position:absolute;left:524.0px;top:144.3px;" width="11" height="11" viewBox="0 0 11 11"><path d="M1 9.5L4 1.5h1L8 9.5M2.2 6.5h4.6" fill="none" stroke="#e0e0e0" stroke-width="0.8"/><path d="M9.6 1v9" stroke="#e0e0e0" stroke-width="0.6"/></svg><svg style="position:absolute;left:524.0px;top:159.2px;" width="11" height="11" viewBox="0 0 11 11"><path d="M5 1.2h4.5v1H8.5v8.3H7.3V2.2H6.6v8.3H5.4V6.3a2.6 2.6 0 0 1 0-5.1z" fill="#e0e0e0"/></svg><svg style="position:absolute;left:524.0px;top:183.0px;" width="11" height="11" viewBox="0 0 11 11"><path d="M2 9.8l4-4" stroke="#e0e0e0" stroke-width="1.5"/><path d="M6.8 4.6l2.6-2.6" stroke="#e0e0e0" stroke-width="0.8"/><path d="M2.5 1.2c-1.2.6-1.6 1.8-1 2.8.6.9 1.7 1 2.5.5l5.5 5.5 1-1-5.5-5.5c.5-.8.4-1.9-.5-2.5" fill="none" stroke="#e0e0e0" stroke-width="0.8"/></svg><svg style="position:absolute;left:524.0px;top:205.3px;" width="11" height="11" viewBox="0 0 11 11"><ellipse cx="5.5" cy="5.5" rx="5" ry="4.2" fill="none" stroke="#e0e0e0" stroke-width="0.9"/><ellipse cx="4.3" cy="5.8" rx="2.4" ry="2" fill="none" stroke="#e0e0e0" stroke-width="0.8"/><ellipse cx="6.7" cy="5.2" rx="2.4" ry="2" fill="none" stroke="#e0e0e0" stroke-width="0.8"/></svg><div style="position:absolute;left:541.4px;top:52.4px;width:158.6px;height:172.6px;background:#4c4c4c;"></div><div style="position:absolute;left:541.4px;top:52.4px;width:158.6px;height:14.1px;background:#3a3a3a;"></div><div style="position:absolute;left:541.4px;top:52.4px;width:35px;height:14.1px;background:#4c4c4c;"></div><div style="position:absolute;left:545.7px;top:55.44px;font-size:7.44px;line-height:8.92px;color:#f0f0f0;font-weight:bold;white-space:nowrap;transform:scaleX(0.8000);transform-origin:0 0;">Proprietà</div><svg style="position:absolute;left:690.8px;top:56.5px;" width="6" height="5.2" viewBox="0 0 6 5.2"><path d="M0 0.6h6M0 1.9h6M0 3.2h6M0 4.5h6" stroke="#8a8a8a" stroke-width="0.9"/></svg><div style="position:absolute;left:547.2px;top:71px;width:11.6px;height:11.8px;background:#2f2f2f;"></div><svg style="position:absolute;left:548.5px;top:72px;" width="9" height="9" viewBox="0 0 9 9"><path d="M0.8 1.6h2.2M1.5 3.4h1.2M3.3 3.4h4.6M2.2 5.1h5.7M1.5 6.8h1.2M3.3 6.8h4.6" stroke="#dcdcdc" stroke-width="1.1"/></svg><svg style="position:absolute;left:559.5px;top:71px;" width="12" height="11" viewBox="0 0 12 11"><circle cx="4.3" cy="7" r="3.3" fill="#dcdcdc"/><path d="M1.5 6.6h5.6" stroke="#4c4c4c" stroke-width="1.1"/><rect x="2.8" y="4.6" width="3" height="1" fill="#4c4c4c"/><path d="M9 0.6L9.6 2.4 11.4 3 9.6 3.6 9 5.4 8.4 3.6 6.6 3 8.4 2.4z" fill="#dcdcdc"/></svg><svg style="position:absolute;left:574.5px;top:72px;" width="8" height="9" viewBox="0 0 8 9"><path d="M4 0.8L7.2 7.2H0.8z" fill="none" stroke="#dcdcdc" stroke-width="0.8"/><circle cx="4" cy="5" r="1" fill="#dcdcdc"/><path d="M2.5 8.3h3" stroke="#dcdcdc" stroke-width="0.7"/></svg><div style="position:absolute;left:587.7px;top:72.75px;font-size:7.75px;line-height:9.30px;color:#dcdcdc;font-weight:normal;white-space:nowrap;transform:scaleX(0.8000);transform-origin:0 0;text-shadow:0.22px 0 0 #dcdcdc">Scena</div><div style="position:absolute;left:541.4px;top:85px;width:152px;height:0.8px;background:#484848;"></div><div style="position:absolute;left:543px;top:87.96px;font-size:7.40px;line-height:8.88px;color:#a8a8a8;font-weight:normal;white-space:nowrap;transform:scaleX(0.8000);transform-origin:0 0;text-shadow:0.22px 0 0 #a8a8a8">Predefiniti:</div><div style="position:absolute;left:576.9px;top:88px;width:110.8px;height:8.6px;background:#3e3e3e;border-radius:1px"></div><div style="position:absolute;left:581px;top:87.93px;font-size:7.62px;line-height:9.15px;color:#e8e8e8;font-weight:normal;white-space:nowrap;transform:scaleX(0.8000);transform-origin:0 0;text-shadow:0.22px 0 0 #e8e8e8">Personale</div><svg style="position:absolute;left:682.5px;top:91px;" width="5" height="3" viewBox="0 0 5 3"><path d="M0.5 0.5l2 2 2-2" fill="none" stroke="#ccc" stroke-width="0.8"/></svg><div style="position:absolute;left:693px;top:88px;width:5.5px;height:136px;background:#454545;"></div><div style="position:absolute;left:693.3px;top:88px;width:5px;height:103.6px;background:#5c5c5c;border-radius:2.5px"></div><div style="position:absolute;left:543.4000000000001px;top:103.4px;width:4.4px;height:4.4px;background:#404040;border:0.5px solid #5a5a5a;border-radius:0.8px"></div><div style="position:absolute;left:552.1px;top:101.53px;font-size:7.29px;line-height:8.74px;color:#e0e0e0;font-weight:normal;white-space:nowrap;transform:scaleX(0.8000);transform-origin:0 0;text-shadow:0.25px 0 0 #e8e8e8">Sezione trasversale</div><div style="position:absolute;left:541.4px;top:111.3px;width:152px;height:0.6px;background:#4b4b4b;"></div><div style="position:absolute;left:543.2px;top:115px;width:5.2px;height:5.2px;background:#ececec;border-radius:0.8px"></div><svg style="position:absolute;left:543.2px;top:115px;" width="5.2" height="5.2" viewBox="0 0 5.2 5.2"><path d="M1 2.6l1.3 1.3 2-2.6" fill="none" stroke="#333" stroke-width="0.9"/></svg><div style="position:absolute;left:552px;top:113.28px;font-size:7.54px;line-height:9.04px;color:#e8e8e8;font-weight:normal;white-space:nowrap;transform:scaleX(0.8000);transform-origin:0 0;text-shadow:0.25px 0 0 #e8e8e8">Superficie</div><div style="position:absolute;left:552px;top:124px;width:14.2px;height:10.3px;background:#4d4d4d;border:0.6px solid #3e3e3e;box-sizing:border-box"></div><div style="position:absolute;left:629.9px;top:114.66px;font-size:7.06px;line-height:8.47px;color:#a0a0a0;font-weight:normal;white-space:nowrap;transform:scaleX(0.8000);transform-origin:0 0;text-shadow:0.22px 0 0 #a0a0a0">Stile:</div><div style="position:absolute;left:647px;top:115px;width:40.7px;height:8.2px;background:#3e3e3e;border-radius:1px"></div><div style="position:absolute;left:650px;top:114.60px;font-size:7.50px;line-height:9.00px;color:#ececec;font-weight:normal;white-space:nowrap;transform:scaleX(0.8000);transform-origin:0 0;text-shadow:0.22px 0 0 #ececec">Opaco</div><svg style="position:absolute;left:682.5px;top:117.7px;" width="5" height="3" viewBox="0 0 5 3"><path d="M0.5 0.5l2 2 2-2" fill="none" stroke="#ccc" stroke-width="0.8"/></svg><div style="position:absolute;left:622.5px;top:126.59px;font-size:7.00px;line-height:8.40px;color:#c8c8c8;font-weight:normal;white-space:nowrap;transform:scaleX(0.8000);transform-origin:0 0;text-shadow:0.22px 0 0 #c8c8c8">Texture:</div><div style="position:absolute;left:647px;top:127px;width:40.7px;height:8px;background:#464646;border:0.5px solid #4a4a4a;box-sizing:border-box"></div><div style="position:absolute;left:650px;top:126.89px;font-size:7.00px;line-height:8.40px;color:#7a7a7a;font-weight:normal;white-space:nowrap;transform:scaleX(0.8000);transform-origin:0 0;">Non dispo...</div><div style="position:absolute;left:541.4px;top:138.8px;width:152px;height:0.6px;background:#4b4b4b;"></div><div style="position:absolute;left:543.4000000000001px;top:141.89999999999998px;width:4.4px;height:4.4px;background:#404040;border:0.5px solid #5a5a5a;border-radius:0.8px"></div><div style="position:absolute;left:552px;top:140.15px;font-size:7.25px;line-height:8.70px;color:#e8e8e8;font-weight:normal;white-space:nowrap;transform:scaleX(0.8000);transform-origin:0 0;text-shadow:0.25px 0 0 #e8e8e8">Linee</div><div style="position:absolute;left:552px;top:150.6px;width:15px;height:10.5px;background:#4d4d4d;border:0.6px solid #3e3e3e;box-sizing:border-box"></div><div style="position:absolute;left:629.9px;top:142.16px;font-size:7.06px;line-height:8.47px;color:#7a7a7a;font-weight:normal;white-space:nowrap;transform:scaleX(0.8000);transform-origin:0 0;">Stile:</div><div style="position:absolute;left:647px;top:142.5px;width:40.7px;height:8px;background:#464646;border:0.5px solid #4a4a4a;box-sizing:border-box"></div><div style="position:absolute;left:650px;top:142.07px;font-size:7.38px;line-height:8.85px;color:#7a7a7a;font-weight:normal;white-space:nowrap;transform:scaleX(0.8000);transform-origin:0 0;">Costante</div><div style="position:absolute;left:622px;top:153.89px;font-size:7.00px;line-height:8.40px;color:#7a7a7a;font-weight:normal;white-space:nowrap;transform:scaleX(0.8000);transform-origin:0 0;">Larghezza:</div><div style="position:absolute;left:654.6px;top:154px;width:33.7px;height:8px;background:#464646;border:0.5px solid #4a4a4a;box-sizing:border-box"></div><div style="position:absolute;left:614px;top:166.79px;font-size:7.00px;line-height:8.40px;color:#7a7a7a;font-weight:normal;white-space:nowrap;transform:scaleX(0.8000);transform-origin:0 0;">Soglia angolo:</div><div style="position:absolute;left:654.6px;top:167px;width:33.7px;height:8px;background:#464646;border:0.5px solid #4a4a4a;box-sizing:border-box"></div><div style="position:absolute;left:541.4px;top:177.5px;width:152px;height:0.6px;background:#4b4b4b;"></div><div style="position:absolute;left:543.4000000000001px;top:181.89999999999998px;width:4.4px;height:4.4px;background:#404040;border:0.5px solid #5a5a5a;border-radius:0.8px"></div><div style="position:absolute;left:552px;top:180.00px;font-size:7.50px;line-height:9.00px;color:#e8e8e8;font-weight:normal;white-space:nowrap;transform:scaleX(0.8000);transform-origin:0 0;text-shadow:0.25px 0 0 #e8e8e8">Punti</div><div style="position:absolute;left:552px;top:191.6px;width:15px;height:10px;background:#4d4d4d;border:0.6px solid #3e3e3e;box-sizing:border-box"></div><div style="position:absolute;left:629.9px;top:181.56px;font-size:7.06px;line-height:8.47px;color:#7a7a7a;font-weight:normal;white-space:nowrap;transform:scaleX(0.8000);transform-origin:0 0;">Stile:</div><div style="position:absolute;left:647.7px;top:182.7px;width:40.6px;height:7px;background:#464646;border:0.5px solid #4a4a4a;box-sizing:border-box"></div><div style="position:absolute;left:650px;top:181.77px;font-size:7.38px;line-height:8.85px;color:#7a7a7a;font-weight:normal;white-space:nowrap;transform:scaleX(0.8000);transform-origin:0 0;">Costante</div><div style="position:absolute;left:630.9px;top:193.60px;font-size:6.83px;line-height:8.19px;color:#7a7a7a;font-weight:normal;white-space:nowrap;transform:scaleX(0.8000);transform-origin:0 0;">Raggio:</div><div style="position:absolute;left:654.6px;top:194px;width:33.7px;height:7.5px;background:#464646;border:0.5px solid #4a4a4a;box-sizing:border-box"></div><div style="position:absolute;left:541.4px;top:204.5px;width:152px;height:0.6px;background:#4b4b4b;"></div><div style="position:absolute;left:541.4px;top:205px;width:152px;height:8px;overflow:hidden"><div style="position:absolute;left:1.8px;top:3.4px;width:4.6px;height:4.6px;background:#4d4d4d;border:0.6px solid #6e6e6e"></div><div style="position:absolute;left:10.6px;top:3.6px;font-size:7.4px;line-height:8px;color:#e8e8e8;white-space:nowrap;transform:scaleX(0.8);transform-origin:0 0">Colori linearizzazione</div><div style="position:absolute;left:119.6px;top:2.6px;width:5.4px;height:5.4px;background:#ececec"></div><svg style="position:absolute;left:119.6px;top:2.6px" width="6" height="6"><path d="M1 2.8l1.3 1.3 2.2-2.8" fill="none" stroke="#333" stroke-width="0.9"/></svg><div style="position:absolute;left:128.5px;top:3.6px;font-size:7.4px;line-height:8px;color:#e8e8e8;white-space:nowrap;transform:scaleX(0.8);transform-origin:0 0">Ombre</div></div><div style="position:absolute;left:541.4px;top:213px;width:152px;height:12px;background:#4c4c4c;"></div><svg style="position:absolute;left:661px;top:216px;" width="7" height="7" viewBox="0 0 7 7"><rect x="0.4" y="0.4" width="6.2" height="6.2" fill="none" stroke="#ddd" stroke-width="0.7"/><path d="M2 4.5a1.5 1.5 0 1 1 3 0M3.5 1.5v2" fill="none" stroke="#ddd" stroke-width="0.7"/></svg><svg style="position:absolute;left:677px;top:215.5px;" width="6" height="7.5" viewBox="0 0 6 7.5"><path d="M0.5 1.5h5M2 1.5V0.5h2v1M1 2v5h4V2" fill="#6a6a6a" stroke="#6a6a6a" stroke-width="0.5"/></svg><div style="position:absolute;left:541.4px;top:225px;width:158.6px;height:3.2px;background:#2f2f2f;"></div><div style="position:absolute;left:541.4px;top:228.2px;width:158.6px;height:176px;background:#4c4c4c;"></div><div style="position:absolute;left:541.4px;top:228.2px;width:158.6px;height:14.8px;background:#3a3a3a;"></div><div style="position:absolute;left:541.4px;top:228.2px;width:18.1px;height:14.8px;background:#4c4c4c;"></div><div style="position:absolute;left:545.7px;top:231.07px;font-size:8.06px;line-height:9.67px;color:#f0f0f0;font-weight:bold;white-space:nowrap;transform:scaleX(0.8000);transform-origin:0 0;">3D</div><div style="position:absolute;left:564.4px;top:231.33px;font-size:7.62px;line-height:9.15px;color:#c8c8c8;font-weight:normal;white-space:nowrap;transform:scaleX(0.8000);transform-origin:0 0;text-shadow:0.22px 0 0 #c8c8c8">Livelli</div><div style="position:absolute;left:590.7px;top:231.21px;font-size:7.82px;line-height:9.39px;color:#c8c8c8;font-weight:normal;white-space:nowrap;transform:scaleX(0.8000);transform-origin:0 0;text-shadow:0.22px 0 0 #c8c8c8">Canali</div><div style="position:absolute;left:618.7px;top:231.14px;font-size:7.95px;line-height:9.54px;color:#c8c8c8;font-weight:normal;white-space:nowrap;transform:scaleX(0.8000);transform-origin:0 0;text-shadow:0.22px 0 0 #c8c8c8">Tracciati</div><div style="position:absolute;left:585.5px;top:230px;width:0.6px;height:11px;background:#383838;"></div><div style="position:absolute;left:614.4px;top:230px;width:0.6px;height:11px;background:#383838;"></div><svg style="position:absolute;left:690.7px;top:232.9px;" width="6" height="5.2" viewBox="0 0 6 5.2"><path d="M0 0.6h6M0 1.9h6M0 3.2h6M0 4.5h6" stroke="#8a8a8a" stroke-width="0.9"/></svg><div style="position:absolute;left:595px;top:248.2px;width:11.2px;height:11.1px;background:#2f2f2f;"></div><svg style="position:absolute;left:596.5px;top:249.5px;" width="8" height="8" viewBox="0 0 8 8"><path d="M0.6 1h6.8M1.4 1v6.2M2.4 3.6h5M2.4 6.6h5" stroke="#dcdcdc" stroke-width="0.9"/><rect x="2.6" y="4.3" width="2.2" height="1.8" fill="#dcdcdc"/></svg><svg style="position:absolute;left:610.3px;top:249px;" width="7" height="9" viewBox="0 0 7 9"><path d="M0.8 2c0-1 1.2-1.5 2.7-1.5S6.2 1 6.2 2v5c0 1-1.2 1.5-2.7 1.5S.8 8 .8 7z" fill="#c8c8c8"/><path d="M0.8 2c0 1 1.2 1.5 2.7 1.5S6.2 3 6.2 2" fill="none" stroke="#888" stroke-width="0.5"/></svg><svg style="position:absolute;left:623.5px;top:249px;" width="8" height="9" viewBox="0 0 8 9"><path d="M1 0.8v2M4 0.8v2M1 2.2h3" stroke="#dcdcdc" stroke-width="0.8"/><rect x="1" y="3" width="4.2" height="5" fill="#dcdcdc"/><path d="M5.2 4.5l2 1.3-2 1.3z" fill="#dcdcdc"/></svg><svg style="position:absolute;left:636.5px;top:249px;" width="7" height="9" viewBox="0 0 7 9"><circle cx="3.5" cy="3.3" r="2.7" fill="#dcdcdc"/><rect x="2.4" y="5.8" width="2.2" height="2.3" fill="#dcdcdc"/></svg><div style="position:absolute;left:541.4px;top:262px;width:150.3px;height:112.5px;background:#4a4a4a;"></div><div style="position:absolute;left:691.7px;top:258.6px;width:8.3px;height:146px;background:#4a4a4a;"></div><div style="position:absolute;left:561px;top:274.5px;width:130.3px;height:10.3px;background:#5f5f5f;"></div><svg style="position:absolute;left:543.3px;top:265.4px;" width="8" height="5.6" viewBox="0 0 8 5.6"><path d="M0.5 2.8Q4 -1.2 7.5 2.8Q4 6.8 0.5 2.8z" fill="none" stroke="#8a8a8a" stroke-width="0.85"/><circle cx="4" cy="2.8" r="1.25" fill="#8a8a8a"/></svg><div style="position:absolute;left:564.7px;top:264.74px;font-size:7.44px;line-height:8.92px;color:#e8e8e8;font-weight:normal;white-space:nowrap;transform:scaleX(0.8000);transform-origin:0 0;text-shadow:0.25px 0 0 #e8e8e8">Ambiente</div><svg style="position:absolute;left:554.3px;top:264.7px;" width="6" height="7" viewBox="0 0 6 7"><path d="M3 0.5v3.5M1 2.5l2 2 2-2M0.5 5.5h5M1.5 6.5h3" fill="none" stroke="#dcdcdc" stroke-width="0.7"/></svg><svg style="position:absolute;left:543.3px;top:276.8px;" width="8" height="5.6" viewBox="0 0 8 5.6"><path d="M0.5 2.8Q4 -1.2 7.5 2.8Q4 6.8 0.5 2.8z" fill="none" stroke="#8a8a8a" stroke-width="0.85"/><circle cx="4" cy="2.8" r="1.25" fill="#8a8a8a"/></svg><div style="position:absolute;left:564.7px;top:276.14px;font-size:7.44px;line-height:8.92px;color:#e8e8e8;font-weight:normal;white-space:nowrap;transform:scaleX(0.8000);transform-origin:0 0;text-shadow:0.25px 0 0 #e8e8e8">Scena</div><svg style="position:absolute;left:554.3px;top:276.6px;" width="7" height="6" viewBox="0 0 7 6"><path d="M0.5 0.5h6M2 2.5h4.5M2 4.5h4.5M1 1v4" stroke="#dcdcdc" stroke-width="0.7"/></svg><svg style="position:absolute;left:543.3px;top:288.0px;" width="8" height="5.6" viewBox="0 0 8 5.6"><path d="M0.5 2.8Q4 -1.2 7.5 2.8Q4 6.8 0.5 2.8z" fill="none" stroke="#8a8a8a" stroke-width="0.85"/><circle cx="4" cy="2.8" r="1.25" fill="#8a8a8a"/></svg><div style="position:absolute;left:573.6px;top:287.34px;font-size:7.44px;line-height:8.92px;color:#e8e8e8;font-weight:normal;white-space:nowrap;transform:scaleX(0.8000);transform-origin:0 0;text-shadow:0.25px 0 0 #e8e8e8">Vista corrente</div><svg style="position:absolute;left:562.5px;top:288.3px;" width="8" height="5" viewBox="0 0 8 5"><rect x="0" y="0.5" width="5" height="4" fill="#dcdcdc"/><path d="M5.5 2.5l2-1.5v3z" fill="#dcdcdc"/></svg><svg style="position:absolute;left:543.3px;top:299.09999999999997px;" width="8" height="5.6" viewBox="0 0 8 5.6"><path d="M0.5 2.8Q4 -1.2 7.5 2.8Q4 6.8 0.5 2.8z" fill="none" stroke="#e8e8e8" stroke-width="0.85"/><circle cx="4" cy="2.8" r="1.25" fill="#e8e8e8"/></svg><div style="position:absolute;left:573.6px;top:298.44px;font-size:7.44px;line-height:8.92px;color:#e8e8e8;font-weight:normal;white-space:nowrap;transform:scaleX(0.8000);transform-origin:0 0;text-shadow:0.25px 0 0 #e8e8e8">Piramide</div><svg style="position:absolute;left:556px;top:300.4px;" width="4" height="3" viewBox="0 0 4 3"><path d="M0.3 0.3l1.7 1.7 1.7-1.7" fill="none" stroke="#aaa" stroke-width="0.7"/></svg><svg style="position:absolute;left:563.3px;top:298.4px;" width="6" height="7" viewBox="0 0 6 7"><path d="M0.5 1.5c0-.7 1.1-1 2.5-1s2.5.3 2.5 1v4c0 .7-1.1 1-2.5 1S.5 6.2.5 5.5z" fill="#dcdcdc"/></svg><svg style="position:absolute;left:543.3px;top:310.2px;" width="8" height="5.6" viewBox="0 0 8 5.6"><path d="M0.5 2.8Q4 -1.2 7.5 2.8Q4 6.8 0.5 2.8z" fill="none" stroke="#e8e8e8" stroke-width="0.85"/><circle cx="4" cy="2.8" r="1.25" fill="#e8e8e8"/></svg><div style="position:absolute;left:582.5px;top:309.54px;font-size:7.44px;line-height:8.92px;color:#e8e8e8;font-weight:normal;white-space:nowrap;transform:scaleX(0.8000);transform-origin:0 0;text-shadow:0.25px 0 0 #e8e8e8">Fronte_Materiale</div><svg style="position:absolute;left:572px;top:310px;" width="6" height="6" viewBox="0 0 6 6"><path d="M1 1v4.5h4M2.5 1.5h2.5v2.5M1 3h3" fill="none" stroke="#dcdcdc" stroke-width="0.7"/></svg><svg style="position:absolute;left:543.3px;top:321.4px;" width="8" height="5.6" viewBox="0 0 8 5.6"><path d="M0.5 2.8Q4 -1.2 7.5 2.8Q4 6.8 0.5 2.8z" fill="none" stroke="#e8e8e8" stroke-width="0.85"/><circle cx="4" cy="2.8" r="1.25" fill="#e8e8e8"/></svg><div style="position:absolute;left:582.5px;top:320.74px;font-size:7.44px;line-height:8.92px;color:#e8e8e8;font-weight:normal;white-space:nowrap;transform:scaleX(0.8000);transform-origin:0 0;text-shadow:0.25px 0 0 #e8e8e8">Destra_Materiale</div><svg style="position:absolute;left:572px;top:321.2px;" width="6" height="6" viewBox="0 0 6 6"><path d="M1 1v4.5h4M2.5 1.5h2.5v2.5M1 3h3" fill="none" stroke="#dcdcdc" stroke-width="0.7"/></svg><svg style="position:absolute;left:543.3px;top:332.9px;" width="8" height="5.6" viewBox="0 0 8 5.6"><path d="M0.5 2.8Q4 -1.2 7.5 2.8Q4 6.8 0.5 2.8z" fill="none" stroke="#e8e8e8" stroke-width="0.85"/><circle cx="4" cy="2.8" r="1.25" fill="#e8e8e8"/></svg><div style="position:absolute;left:582.5px;top:332.24px;font-size:7.44px;line-height:8.92px;color:#e8e8e8;font-weight:normal;white-space:nowrap;transform:scaleX(0.8000);transform-origin:0 0;text-shadow:0.25px 0 0 #e8e8e8">Retro_Materiale</div><svg style="position:absolute;left:572px;top:332.7px;" width="6" height="6" viewBox="0 0 6 6"><path d="M1 1v4.5h4M2.5 1.5h2.5v2.5M1 3h3" fill="none" stroke="#dcdcdc" stroke-width="0.7"/></svg><svg style="position:absolute;left:543.3px;top:344.2px;" width="8" height="5.6" viewBox="0 0 8 5.6"><path d="M0.5 2.8Q4 -1.2 7.5 2.8Q4 6.8 0.5 2.8z" fill="none" stroke="#e8e8e8" stroke-width="0.85"/><circle cx="4" cy="2.8" r="1.25" fill="#e8e8e8"/></svg><div style="position:absolute;left:582.5px;top:343.54px;font-size:7.44px;line-height:8.92px;color:#e8e8e8;font-weight:normal;white-space:nowrap;transform:scaleX(0.8000);transform-origin:0 0;text-shadow:0.25px 0 0 #e8e8e8">Sinistra_Materiale</div><svg style="position:absolute;left:572px;top:344px;" width="6" height="6" viewBox="0 0 6 6"><path d="M1 1v4.5h4M2.5 1.5h2.5v2.5M1 3h3" fill="none" stroke="#dcdcdc" stroke-width="0.7"/></svg><svg style="position:absolute;left:543.3px;top:355.59999999999997px;" width="8" height="5.6" viewBox="0 0 8 5.6"><path d="M0.5 2.8Q4 -1.2 7.5 2.8Q4 6.8 0.5 2.8z" fill="none" stroke="#e8e8e8" stroke-width="0.85"/><circle cx="4" cy="2.8" r="1.25" fill="#e8e8e8"/></svg><div style="position:absolute;left:582.5px;top:354.94px;font-size:7.44px;line-height:8.92px;color:#e8e8e8;font-weight:normal;white-space:nowrap;transform:scaleX(0.8000);transform-origin:0 0;text-shadow:0.25px 0 0 #e8e8e8">Inferiore_Materiale</div><svg style="position:absolute;left:572px;top:355.4px;" width="6" height="6" viewBox="0 0 6 6"><path d="M1 1v4.5h4M2.5 1.5h2.5v2.5M1 3h3" fill="none" stroke="#dcdcdc" stroke-width="0.7"/></svg><svg style="position:absolute;left:543.3px;top:366.4px;" width="8" height="5.6" viewBox="0 0 8 5.6"><path d="M0.5 2.8Q4 -1.2 7.5 2.8Q4 6.8 0.5 2.8z" fill="none" stroke="#e8e8e8" stroke-width="0.85"/><circle cx="4" cy="2.8" r="1.25" fill="#e8e8e8"/></svg><div style="position:absolute;left:573.6px;top:365.74px;font-size:7.44px;line-height:8.92px;color:#e8e8e8;font-weight:normal;white-space:nowrap;transform:scaleX(0.8000);transform-origin:0 0;text-shadow:0.25px 0 0 #e8e8e8">Luce infinita 1</div><svg style="position:absolute;left:563.5px;top:365.7px;" width="7" height="7.5" viewBox="0 0 7 7.5"><circle cx="3" cy="3" r="1.2" fill="#dcdcdc"/><path d="M3 0v1M3 5v1M0 3h1M5 3h1M1 1l.6.6M4.4 4.4l.6.6M1 5l.6-.6M4.4 1.6L5 1" stroke="#dcdcdc" stroke-width="0.6"/><circle cx="5.8" cy="6.5" r="0.6" fill="#dcdcdc"/></svg><div style="position:absolute;left:541.4px;top:389px;width:152px;height:0.8px;background:#444;"></div><svg style="position:absolute;left:600px;top:391.5px;" width="6" height="8" viewBox="0 0 6 8"><path d="M0.5 1.8c0-.8 1.1-1.3 2.5-1.3s2.5.5 2.5 1.3v4.4c0 .8-1.1 1.3-2.5 1.3S.5 7 .5 6.2z" fill="#cccccc"/></svg><div style="position:absolute;left:605.5px;top:399.5px;width:0.9px;height:0.9px;background:#ddd;"></div><svg style="position:absolute;left:616px;top:391px;" width="6" height="8" viewBox="0 0 6 8"><circle cx="3" cy="2.8" r="2.4" fill="#cccccc"/><rect x="2" y="5" width="2" height="2" fill="#cccccc"/></svg><div style="position:absolute;left:621.5px;top:399.5px;width:0.9px;height:0.9px;background:#ddd;"></div><svg style="position:absolute;left:631px;top:391.5px;" width="8" height="8" viewBox="0 0 8 8"><rect x="0.5" y="0.5" width="7" height="7" fill="none" stroke="#cccccc" stroke-width="0.8"/><path d="M0.5 2h7" stroke="#cccccc" stroke-width="0.8"/><circle cx="4" cy="4.8" r="1.4" fill="none" stroke="#cccccc" stroke-width="0.7"/></svg><svg style="position:absolute;left:647px;top:391px;" width="8" height="8" viewBox="0 0 8 8"><path d="M4 0.5v4M0.5 6.5h7M0.5 7.5h7" stroke="#cccccc" stroke-width="0.9"/><circle cx="4" cy="1.5" r="0.9" fill="#cccccc"/></svg><svg style="position:absolute;left:663px;top:391px;" width="8" height="8" viewBox="0 0 8 8"><path d="M3.5 0.5v4M0.5 6.5h4M5 5.5l2 2" stroke="#888" stroke-width="0.9"/></svg><svg style="position:absolute;left:678.5px;top:391px;" width="7" height="8" viewBox="0 0 7 8"><path d="M0.5 1.5h6M2 1.5V0.5h3v1M1 2v5.5h5V2" fill="#6a6a6a" stroke="#6a6a6a" stroke-width="0.5"/></svg>
</body></html>
